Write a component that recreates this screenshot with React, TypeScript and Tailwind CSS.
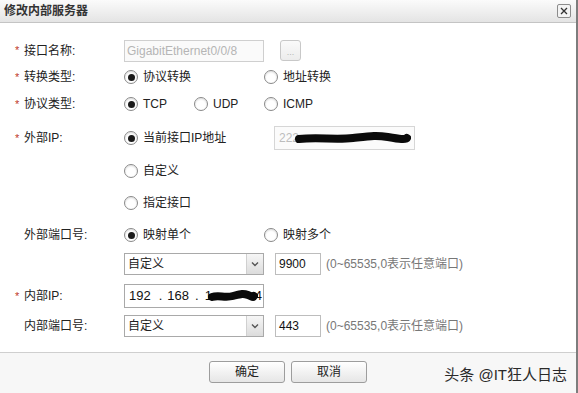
import React from "react";

const font = { fontFamily: '"Liberation Sans", "Noto Sans CJK SC", sans-serif' };

const Radio = ({ checked, label, w }: { checked?: boolean; label: string; w: string }) => (
  <div className={`flex items-center ${w}`}>
    <span className="flex h-[14px] w-[14px] items-center justify-center rounded-full border border-[#8a8a8a] bg-white shadow-[inset_0_1px_2px_rgba(0,0,0,0.15)]">
      {checked && <span className="h-[7px] w-[7px] rounded-full bg-[#1a1a1a]" />}
    </span>
    <span className="ml-[5px] text-[12px] text-[#222]">{label}</span>
  </div>
);

const Label = ({ text, req }: { text: string; req?: boolean }) => (
  <div className="flex w-[124px] items-center pl-[15px] text-[12px] text-[#222]">
    <span className="w-[9px] text-[11px] text-[#c0392b]">{req ? "*" : ""}</span>
    <span>{text}</span>
  </div>
);

const Select = () => (
  <div className="flex h-[22px] w-[140px] items-center border border-[#a9a9a9] bg-white">
    <span className="flex-1 pl-[3px] text-[12px] text-[#222]">自定义</span>
    <span className="flex h-[20px] w-[17px] items-center justify-center border-l border-[#d0d0d0] bg-gradient-to-b from-[#f6f6f6] to-[#dcdcdc]">
      <svg width="8" height="6" viewBox="0 0 8 6">
        <path d="M1 1.5 L4 4.5 L7 1.5" fill="none" stroke="#555" strokeWidth="1.4" />
      </svg>
    </span>
  </div>
);

const PortInput = ({ value }: { value: string }) => (
  <div className="flex items-center">
    <div className="ml-[11px] flex h-[22px] w-[46px] items-center border border-[#bdbdbd] bg-white pl-[3px] text-[12px] text-[#111]">
      {value}
    </div>
    <span className="ml-[5px] text-[12px] text-[#777]">(0~65535,0表示任意端口)</span>
  </div>
);

// redaction blot drawn over the masked address digits
const Scribble = ({ w }: { w: number }) => (
  <svg width={w} height="14" viewBox={`0 0 ${w} 14`} className="absolute top-1/2 -translate-y-1/2">
    <path
      d={`M4 8 C ${w * 0.2} 6, ${w * 0.35} 9, ${w * 0.5} 7 S ${w * 0.7} 4, ${w * 0.8} 6 S ${w - 5} 9, ${w - 4} 7`}
      fill="none"
      stroke="#0a0a0a"
      strokeWidth="8"
      strokeLinecap="round"
    />
  </svg>
);

const App = () => {
  return (
    <div className="relative h-[393px] w-[578px] overflow-hidden bg-white" style={font}>
      <div className="flex h-full flex-col border-r-2 border-[#7d7d7d]">
        {/* title */}
        <div className="flex h-[23px] items-center justify-between border-b border-[#c4c4c4] bg-gradient-to-b from-[#fbfbfb] to-[#e4e4e4] pl-[4px] pr-[5px]">
          <span className="text-[12px] font-bold text-[#333]">修改内部服务器</span>
          <span className="flex h-[14px] w-[14px] items-center justify-center rounded-[2px] border border-[#8c8c8c] bg-[#f3f3f3]">
            <svg width="8" height="8" viewBox="0 0 8 8">
              <path d="M1 1 L7 7 M7 1 L1 7" stroke="#333" strokeWidth="1.3" />
            </svg>
          </span>
        </div>

        <div className="flex flex-1 flex-col pt-[15px]">
          <div className="flex h-[25px] items-center">
            <Label text="接口名称:" req />
            <div className="flex h-[22px] w-[140px] items-center border border-[#cfcfcf] bg-[#fafafa] pl-[2px] text-[12px] text-[#b5b5b5]">
              GigabitEthernet0/0/8
            </div>
            <div className="ml-[16px] flex h-[21px] w-[21px] items-end justify-center rounded-[3px] border border-[#c8c8c8] bg-gradient-to-b from-[#fafafa] to-[#ececec] pb-[3px] text-[9px] leading-none text-[#b5b5b5]">
              ...
            </div>
          </div>

          <div className="flex h-[28px] items-center">
            <Label text="转换类型:" req />
            <Radio checked label="协议转换" w="w-[140px]" />
            <Radio label="地址转换" w="w-[140px]" />
          </div>

          <div className="flex h-[26px] items-center">
            <Label text="协议类型:" req />
            <Radio checked label="TCP" w="w-[70px]" />
            <Radio label="UDP" w="w-[70px]" />
            <Radio label="ICMP" w="w-[70px]" />
          </div>

          <div className="flex h-[42px] items-center">
            <Label text="外部IP:" req />
            <Radio checked label="当前接口IP地址" w="w-[150px]" />
            <div className="relative flex h-[24px] w-[141px] items-center border border-[#d6d6d6] bg-[#fbfbfb] pl-[4px] text-[12px] text-[#bdbdbd]">
              222
              <span className="absolute left-[20px] top-0 h-full">
                <Scribble w={116} />
              </span>
            </div>
          </div>

          <div className="flex h-[24px] items-center">
            <Label text="" />
            <Radio label="自定义" w="w-[140px]" />
          </div>

          <div className="flex h-[40px] items-center">
            <Label text="" />
            <Radio label="指定接口" w="w-[140px]" />
          </div>

          <div className="flex h-[24px] items-center">
            <Label text="外部端口号:" />
            <Radio checked label="映射单个" w="w-[140px]" />
            <Radio label="映射多个" w="w-[140px]" />
          </div>

          <div className="flex h-[34px] items-center">
            <Label text="" />
            <Select />
            <PortInput value="9900" />
          </div>

          <div className="flex h-[30px] items-center">
            <Label text="内部IP:" req />
            <div className="relative flex h-[24px] w-[140px] items-center border border-[#a9a9a9] bg-white pl-[4px] text-[13px] text-[#111]">
              <span>192</span>
              <span className="ml-[8px]">.</span>
              <span className="ml-[5px]">168</span>
              <span className="ml-[6px]">.</span>
              <span className="ml-[6px]">1</span>
              <span className="absolute right-[1px] text-[13px]">4</span>
              <span className="absolute left-[83px] top-0 h-full">
                <Scribble w={50} />
              </span>
            </div>
          </div>

          <div className="flex h-[30px] items-center">
            <Label text="内部端口号:" />
            <Select />
            <PortInput value="443" />
          </div>
        </div>

        {/* footer */}
        <div className="flex h-[41px] items-center justify-center gap-[6px] border-t border-[#cfcfcf] bg-[#f7f7f7] pb-[2px]">
          <button className="h-[22px] w-[76px] rounded-[3px] border border-[#9d9d9d] bg-gradient-to-b from-[#ffffff] to-[#e6e6e6] text-[12px] text-[#222]">
            确定
          </button>
          <button className="h-[22px] w-[76px] rounded-[3px] border border-[#9d9d9d] bg-gradient-to-b from-[#ffffff] to-[#e6e6e6] text-[12px] text-[#222]">
            取消
          </button>
        </div>
      </div>

      <div className="absolute bottom-[7px] right-[11px] text-[15px] text-[#2a2a2a]">头条 @IT狂人日志</div>
    </div>
  );
};

export default App;
